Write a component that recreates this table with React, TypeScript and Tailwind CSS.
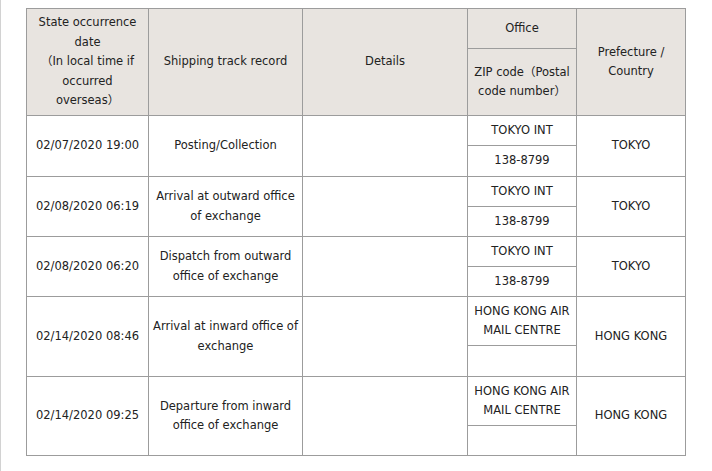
const rows = [
  { date: "02/07/2020 19:00", track: ["Posting/Collection"], office: ["TOKYO INT"], zip: "138-8799", pref: "TOKYO", h1: "h-[30px]", h2: "h-[31px]" },
  { date: "02/08/2020 06:19", track: ["Arrival at outward office", "of exchange"], office: ["TOKYO INT"], zip: "138-8799", pref: "TOKYO", h1: "h-[30px]", h2: "h-[30px]" },
  { date: "02/08/2020 06:20", track: ["Dispatch from outward", "office of exchange"], office: ["TOKYO INT"], zip: "138-8799", pref: "TOKYO", h1: "h-[30px]", h2: "h-[30px]" },
  { date: "02/14/2020 08:46", track: ["Arrival at inward office of", "exchange"], office: ["HONG KONG AIR", "MAIL CENTRE"], zip: "", pref: "HONG KONG", h1: "h-[49px]", h2: "h-[31px]" },
  { date: "02/14/2020 09:25", track: ["Departure from inward", "office of exchange"], office: ["HONG KONG AIR", "MAIL CENTRE"], zip: "", pref: "HONG KONG", h1: "h-[49px]", h2: "h-[30px]" },
];

const cell = "border border-[#9c9c9c] text-center align-middle px-0 py-0 whitespace-nowrap";
const head = cell + " bg-[#e8e4e0] font-normal";

const Lines = ({ lines }: { lines: string[] }) => (
  <>
    {lines.map((l, i) => (
      <div key={i}>{l}</div>
    ))}
  </>
);

export default function App() {
  return (
    <div
      className="min-h-[471px] border-l border-[#d2d2d2] bg-white pt-[8px] text-[11.5px] leading-[19.5px] text-[#222]"
      style={{ fontFamily: '"DejaVu Sans", "Noto Sans CJK JP", sans-serif' }}
    >
      <table className="ml-[25px] w-[659px] table-fixed border-collapse">
        <colgroup>
          <col className="w-[122px]" />
          <col className="w-[154px]" />
          <col className="w-[165px]" />
          <col className="w-[109px]" />
          <col className="w-[109px]" />
        </colgroup>
        <thead>
          <tr className="h-[40px]">
            <th rowSpan={2} className={head}>
              <Lines lines={["State occurrence", "date", "（In local time if", "occurred", "overseas）"]} />
            </th>
            <th rowSpan={2} className={head}>Shipping track record</th>
            <th rowSpan={2} className={head}>Details</th>
            <th className={head}>Office</th>
            <th rowSpan={2} className={head}>
              <Lines lines={["Prefecture /", "Country"]} />
            </th>
          </tr>
          <tr className="h-[67px]">
            <th className={head}>
              <Lines lines={["ZIP code（Postal", "code number）"]} />
            </th>
          </tr>
        </thead>
        <tbody>
          {rows.map((r, i) => [
            <tr key={i + "a"} className={r.h1}>
              <td rowSpan={2} className={cell}>{r.date}</td>
              <td rowSpan={2} className={cell}>
                <Lines lines={r.track} />
              </td>
              <td rowSpan={2} className={cell}></td>
              <td className={cell}>
                <Lines lines={r.office} />
              </td>
              <td rowSpan={2} className={cell}>{r.pref}</td>
            </tr>,
            <tr key={i + "b"} className={r.h2}>
              <td className={cell}>{r.zip}</td>
            </tr>,
          ])}
        </tbody>
      </table>
    </div>
  );
}
